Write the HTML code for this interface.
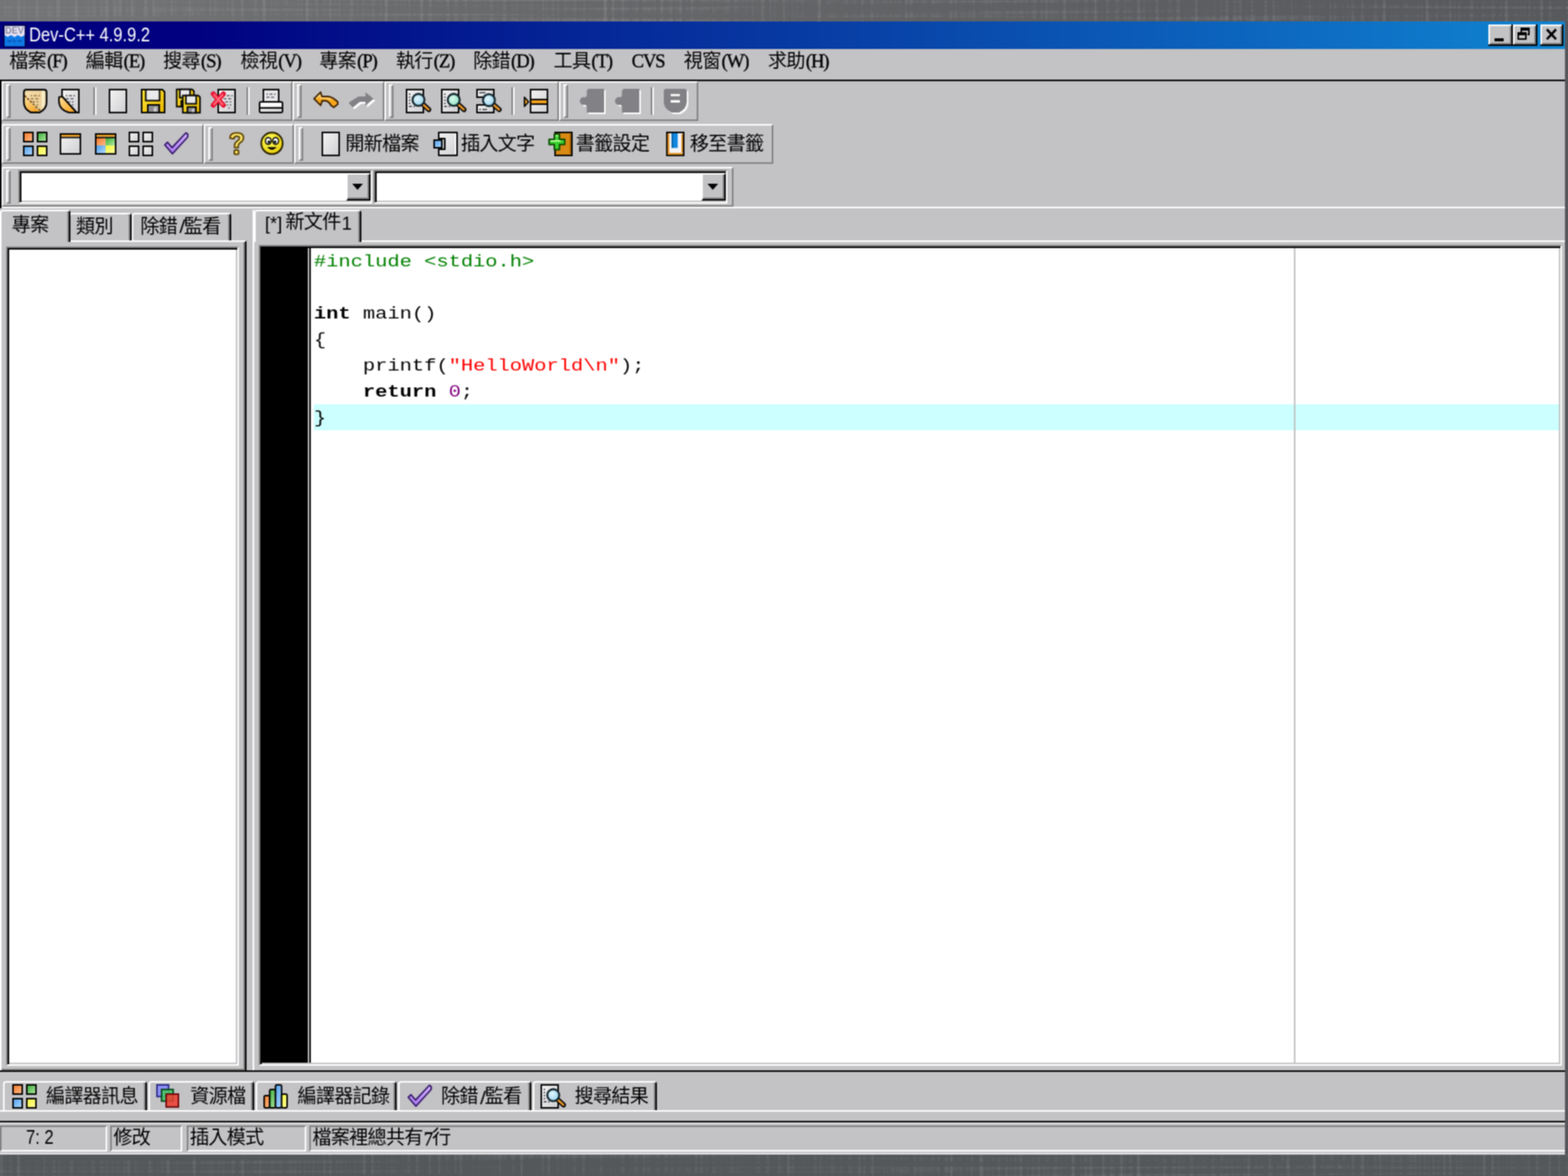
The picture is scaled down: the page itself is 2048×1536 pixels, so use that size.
<!DOCTYPE html>
<html lang="zh-Hant"><head><meta charset="utf-8"><title>Dev-C++ 4.9.9.2</title>
<style>
html,body{margin:0;padding:0;background:#595b5d;overflow:hidden}
body{width:2048px;height:1536px;position:relative}
#w{position:absolute;left:0;top:0;width:2048px;height:1536px;overflow:hidden;filter:url(#soft)}
#s{position:absolute;left:0;top:0;width:1024px;height:768px;transform:scale(2);transform-origin:0 0;font-family:"Liberation Sans",sans-serif;font-size:12px;line-height:12px;color:#000;overflow:hidden;background:#595b5d}
#s div,#s .t,#s .ic{position:absolute;box-sizing:border-box}
.t{white-space:nowrap;line-height:13px;height:13px}
.l{position:relative;top:.4px}
.ic{overflow:visible}
.cj{display:inline-block;vertical-align:top;font-family:"Liberation Sans","Noto Sans CJK TC",sans-serif;font-size:12.5px;letter-spacing:-.5px;line-height:13px;height:13px;white-space:nowrap;overflow:visible}
.ser{font-family:"Liberation Serif",serif;font-size:12.2px;letter-spacing:-.75px}
.san{font-family:"Liberation Sans",sans-serif}
.mono{font-family:"Liberation Mono",monospace}
.face{background:#c3c2c5}
.raised{background:#c3c2c5;border:1px solid;border-color:#fff #808080 #808080 #fff}
.sunk1{border:1px solid;border-color:#808080 #fff #fff #808080}
.sunk2{border:1px solid;border-color:#808080 #fff #fff #808080;box-shadow:inset 1px 1px 0 #000, inset -1px -1px 0 #c3c2c5}
.grip{width:3px;border:1px solid;border-color:#fff #808080 #808080 #fff;background:#c3c2c5}
.sep{width:2px;border-left:1px solid #808080;border-right:1px solid #fff}
.sp{display:inline-block;width:1px}
.cj+.l{margin-left:.8px}
.ser .l{-webkit-text-stroke:.22px currentColor}

</style></head>
<body>
<svg width="0" height="0" style="position:absolute"><defs><filter id="soft" x="0" y="0" width="100%" height="100%" color-interpolation-filters="sRGB"><feConvolveMatrix order="3" kernelMatrix="1 2 1 2 4 2 1 2 1" divisor="16" edgeMode="duplicate" preserveAlpha="true"/></filter>
<linearGradient id="gPg" x1="0" y1="0" x2="1" y2="1"><stop offset="0" stop-color="#f4f4f4"/><stop offset="1" stop-color="#cfcfd2"/></linearGradient>
<linearGradient id="gYl" x1="0" y1="0" x2="1" y2="1"><stop offset="0" stop-color="#ffe83a"/><stop offset="1" stop-color="#e8b400"/></linearGradient>
<linearGradient id="gOr" x1="0" y1="0" x2="1" y2="1"><stop offset="0" stop-color="#fde2a0"/><stop offset="1" stop-color="#f79a10"/></linearGradient>
<linearGradient id="gTan" x1="0" y1="0" x2="1" y2="0"><stop offset="0" stop-color="#f6dfae"/><stop offset="0.75" stop-color="#ecd09a"/><stop offset="1" stop-color="#f7ecc4"/></linearGradient>
<linearGradient id="gSo" x1="0" y1="0" x2="1" y2="1"><stop offset="0" stop-color="#f87a28"/><stop offset="1" stop-color="#fbb98a"/></linearGradient>
<linearGradient id="gSg" x1="0" y1="0" x2="1" y2="1"><stop offset="0" stop-color="#38a838"/><stop offset="1" stop-color="#b0eca0"/></linearGradient>
<linearGradient id="gSb" x1="0" y1="0" x2="1" y2="1"><stop offset="0" stop-color="#4ea0f0"/><stop offset="1" stop-color="#b0d8fa"/></linearGradient>
<linearGradient id="gSy" x1="0" y1="0" x2="1" y2="1"><stop offset="0" stop-color="#f8f838"/><stop offset="1" stop-color="#fafaa0"/></linearGradient>
<radialGradient id="gLb" cx="0.4" cy="0.4" r="0.7"><stop offset="0" stop-color="#e4f6fc"/><stop offset="1" stop-color="#8cd0ec"/></radialGradient>
<radialGradient id="gLg" cx="0.4" cy="0.4" r="0.7"><stop offset="0" stop-color="#dcfaee"/><stop offset="1" stop-color="#84e0bc"/></radialGradient>
<radialGradient id="gSm" cx="0.4" cy="0.35" r="0.75"><stop offset="0" stop-color="#ffff60"/><stop offset="1" stop-color="#e6c800"/></radialGradient>
<linearGradient id="gPu" x1="0" y1="0" x2="0" y2="1"><stop offset="0" stop-color="#d8b8ff"/><stop offset="1" stop-color="#a878f0"/></linearGradient>
</defs></svg>
<div id="w"><div id="s">
<svg class="ic" style="left:0;top:0" width="1024" height="768" viewBox="0 0 1024 768"><defs><filter id="lin" x="0" y="0" width="100%" height="100%" color-interpolation-filters="sRGB"><feTurbulence type="fractalNoise" baseFrequency="0.35 0.004" numOctaves="2" seed="3" result="v"/><feTurbulence type="fractalNoise" baseFrequency="0.004 0.45" numOctaves="2" seed="8" result="h"/><feBlend in="v" in2="h" mode="screen" result="b"/><feColorMatrix in="b" type="matrix" values="0 0 0 0 1  0 0 0 0 1  0 0 0 0 1  1.2 1.2 1.2 0 -2.1"/></filter><linearGradient id="dtop" x1="0" y1="0" x2="1" y2="0"><stop offset="0" stop-color="#747577"/><stop offset=".3" stop-color="#696a6c"/><stop offset=".7" stop-color="#5e5f62"/><stop offset="1" stop-color="#58595c"/></linearGradient></defs><rect x="0" y="0" width="1024" height="14" fill="url(#dtop)"/><rect x="0" y="754" width="1024" height="14" fill="#54585a"/><rect x="1022" y="14" width="2" height="740" fill="#56575b"/><rect x="0" y="0" width="1024" height="14" filter="url(#lin)" opacity=".27"/><rect x="0" y="754" width="1024" height="14" filter="url(#lin)" opacity=".26"/></svg>
<div class="face" style="left:0px;top:14px;width:1022px;height:740px;"></div>
<div class="" style="left:0px;top:14px;width:1022px;height:18px;background:linear-gradient(90deg,#00007f 0%,#000080 12%,#1084d0 100%)"></div>
<svg class="ic" style="left:2.2px;top:15.7px" width="15.1" height="15" viewBox="0 0 16 16"><rect x="0" y="0" width="16" height="16" fill="#00004c"/><rect x="1" y="1" width="14" height="6.5" fill="#e6e3f6"/><rect x="1" y="7.5" width="14" height="7.7" fill="#0f7ae6"/><path d="M1 7.5l2.2 1.2 2.3-1.4 2.4 1.5 2.3-1.5 2.3 1.4L15 7.5z" fill="#e6e3f6"/><text x="1.4" y="6.6" font-family="Liberation Sans,sans-serif" font-weight="bold" font-size="6.4" fill="#8a8aa0" textLength="13" lengthAdjust="spacingAndGlyphs">DEV</text><path d="M3 11.5h3M7 10.5l1.5 2M10 11.5h3" stroke="#0a58b8" stroke-width="1.2" fill="none"/></svg>
<span class="t san" style="left:19px;top:15.7px;color:#fff;font-size:12.9px;transform:scaleX(.835);transform-origin:0 0"><span class="l">Dev-C++ 4.9.9.2</span></span>
<svg class="ic" style="left:972px;top:16px" width="16" height="14" viewBox="0 0 16 14"><rect width="16" height="14" fill="#c3c2c5"/><path d="M0 13.5h15.5 V0" stroke="#000" fill="none"/><path d="M0.5 13V0.5H15" stroke="#fff" fill="none"/><path d="M1 12.5h13.5V1" stroke="#808080" fill="none"/><rect x="4" y="9" width="6" height="2" fill="#000"/></svg>
<svg class="ic" style="left:988px;top:16px" width="16" height="14" viewBox="0 0 16 14"><rect width="16" height="14" fill="#c3c2c5"/><path d="M0 13.5h15.5 V0" stroke="#000" fill="none"/><path d="M0.5 13V0.5H15" stroke="#fff" fill="none"/><path d="M1 12.5h13.5V1" stroke="#808080" fill="none"/><path d="M5.5 5V2.5h5v4H9.5" stroke="#000" fill="none"/><rect x="5" y="2" width="6" height="2" fill="#000"/><rect x="3.5" y="5.5" width="5" height="4" stroke="#000" fill="none"/><rect x="3" y="5" width="6" height="2" fill="#000"/></svg>
<svg class="ic" style="left:1006px;top:16px" width="15" height="14" viewBox="0 0 15 14"><rect width="15" height="14" fill="#c3c2c5"/><path d="M0 13.5h14.5 V0" stroke="#000" fill="none"/><path d="M0.5 13V0.5H14" stroke="#fff" fill="none"/><path d="M1 12.5h12.5V1" stroke="#808080" fill="none"/><path d="M4.2 3.2l6 6.4M10.2 3.2l-6 6.4" stroke="#000" stroke-width="1.5" fill="none"/></svg>
<span class="t ser" style="left:6px;top:34px;"><span class="cj" style="width:24px">檔案</span><span class="l">(F)</span></span>
<span class="t ser" style="left:56px;top:34px;"><span class="cj" style="width:24px">編輯</span><span class="l">(E)</span></span>
<span class="t ser" style="left:106.5px;top:34px;"><span class="cj" style="width:24px">搜尋</span><span class="l">(S)</span></span>
<span class="t ser" style="left:157px;top:34px;"><span class="cj" style="width:24px">檢視</span><span class="l">(V)</span></span>
<span class="t ser" style="left:208.5px;top:34px;"><span class="cj" style="width:24px">專案</span><span class="l">(P)</span></span>
<span class="t ser" style="left:258.5px;top:34px;"><span class="cj" style="width:24px">執行</span><span class="l">(Z)</span></span>
<span class="t ser" style="left:309px;top:34px;"><span class="cj" style="width:24px">除錯</span><span class="l">(D)</span></span>
<span class="t ser" style="left:361.5px;top:34px;"><span class="cj" style="width:24px">工具</span><span class="l">(T)</span></span>
<span class="t ser" style="left:412.5px;top:34px;"><span class="l">CVS</span></span>
<span class="t ser" style="left:446.5px;top:34px;"><span class="cj" style="width:24px">視窗</span><span class="l">(W)</span></span>
<span class="t ser" style="left:501.5px;top:34px;"><span class="cj" style="width:24px">求助</span><span class="l">(H)</span></span>
<div class="" style="left:0px;top:52px;width:1022px;height:1px;background:#000"></div>
<div class="" style="left:0px;top:52px;width:1px;height:84px;background:#000"></div>
<div class="" style="left:1px;top:135px;width:1021px;height:1px;background:#fff"></div>
<div class="raised" style="left:1px;top:53px;width:190px;height:26px;"></div>
<div class="grip" style="left:4px;top:55px;width:3px;height:22px;"></div>
<div class="raised" style="left:191px;top:53px;width:60px;height:26px;"></div>
<div class="grip" style="left:194px;top:55px;width:3px;height:22px;"></div>
<div class="raised" style="left:251px;top:53px;width:114px;height:26px;"></div>
<div class="grip" style="left:254px;top:55px;width:3px;height:22px;"></div>
<div class="raised" style="left:365px;top:53px;width:91px;height:26px;"></div>
<div class="grip" style="left:368px;top:55px;width:3px;height:22px;"></div>
<svg class="ic" style="left:15px;top:58px" width="16" height="16" viewBox="0 0 16 16"><path d="M.6 2.2Q.6 .6 2.2 .6H13.8Q15.4 .6 15.4 2.2V9Q15.4 13 11 15.4H5Q.6 13 .6 9Z" fill="url(#gTan)"/><path d="M13 1v11" stroke="#f9f0cf" stroke-width="1.4"/><path d="M.6 5L11 15.4H5Q.6 13 .6 9Z" fill="url(#gOr)"/><path d="M1 4.4L11.8 14.8" stroke="#7a4a08" stroke-width="1" stroke-dasharray="1.6 .9" fill="none"/><rect x="5" y="4" width="1" height="1" fill="#a88a50"/><rect x="7" y="4" width="2" height="1" fill="#a88a50"/><rect x="10" y="4" width="1" height="1" fill="#a88a50"/><rect x="5" y="6" width="2" height="1" fill="#a88a50"/><rect x="8" y="6" width="2" height="1" fill="#a88a50"/><rect x="6" y="8" width="2" height="1" fill="#a88a50"/><rect x="9" y="8" width="1" height="1" fill="#a88a50"/><rect x="7" y="10" width="1" height="1" fill="#a88a50"/><rect x="9" y="10" width="1" height="1" fill="#a88a50"/><rect x="8" y="12" width="1" height="1" fill="#a88a50"/><path d="M.6 2.2Q.6 .6 2.2 .6H13.8Q15.4 .6 15.4 2.2V9Q15.4 13 11 15.4H5Q.6 13 .6 9Z" fill="none" stroke="#000" stroke-width="1.1"/></svg>
<svg class="ic" style="left:38px;top:58px" width="16" height="16" viewBox="0 0 16 16"><path d="M2.5 .5H13.5V15.5H12L2.5 5Z" fill="url(#gPg)" stroke="#000"/><rect x="5" y="4" width="1" height="1" fill="#787880"/><rect x="7" y="4" width="2" height="1" fill="#787880"/><rect x="10" y="4" width="1" height="1" fill="#787880"/><rect x="5" y="6" width="2" height="1" fill="#787880"/><rect x="8" y="6" width="2" height="1" fill="#787880"/><rect x="6" y="8" width="2" height="1" fill="#787880"/><rect x="9" y="8" width="1" height="1" fill="#787880"/><rect x="7" y="10" width="1" height="1" fill="#787880"/><rect x="9" y="10" width="1" height="1" fill="#787880"/><rect x="8" y="12" width="1" height="1" fill="#787880"/><path d="M.5 5.5L2.6 5 12 15.5H7Q.5 13.5 .5 8Z" fill="url(#gOr)" stroke="#000" stroke-linejoin="round"/></svg>
<svg class="ic" style="left:69px;top:58px" width="16" height="16" viewBox="0 0 16 16"><rect x="2.5" y="0.5" width="11" height="15" fill="url(#gPg)" stroke="#000"/></svg>
<svg class="ic" style="left:92px;top:58px" width="16" height="16" viewBox="0 0 16 16"><g transform="translate(0 0) scale(1)"><path d="M.5 .5H14L15.5 2V15.5H.5Z" fill="url(#gYl)" stroke="#000" stroke-width="1"/><rect x="3.2" y=".5" width="9" height="7.2" fill="#e9e9ec" stroke="#000" stroke-width="1"/><rect x="4.5" y="10.5" width="7.5" height="5" fill="#8a8a8e" stroke="#000" stroke-width="1"/><rect x="8.4" y="12" width="2" height="3" fill="#c8c8cc"/></g></svg>
<svg class="ic" style="left:115px;top:58px" width="16" height="16" viewBox="0 0 16 16"><g transform="translate(0 0) scale(0.75)"><path d="M.5 .5H14L15.5 2V15.5H.5Z" fill="url(#gYl)" stroke="#000" stroke-width="1.33333"/><rect x="3.2" y=".5" width="9" height="7.2" fill="#e9e9ec" stroke="#000" stroke-width="1.33333"/><rect x="4.5" y="10.5" width="7.5" height="5" fill="#8a8a8e" stroke="#000" stroke-width="1.33333"/><rect x="8.4" y="12" width="2" height="3" fill="#c8c8cc"/></g><g transform="translate(4 4) scale(0.75)"><path d="M.5 .5H14L15.5 2V15.5H.5Z" fill="url(#gYl)" stroke="#000" stroke-width="1.33333"/><rect x="3.2" y=".5" width="9" height="7.2" fill="#e9e9ec" stroke="#000" stroke-width="1.33333"/><rect x="4.5" y="10.5" width="7.5" height="5" fill="#8a8a8e" stroke="#000" stroke-width="1.33333"/><rect x="8.4" y="12" width="2" height="3" fill="#c8c8cc"/></g></svg>
<svg class="ic" style="left:138px;top:58px" width="16" height="16" viewBox="0 0 16 16"><rect x="4.5" y="0.5" width="11" height="15" fill="url(#gPg)" stroke="#000"/><rect x="8" y="4" width="1" height="1" fill="#787880"/><rect x="10" y="4" width="2" height="1" fill="#787880"/><rect x="13" y="4" width="1" height="1" fill="#787880"/><rect x="8" y="6" width="2" height="1" fill="#787880"/><rect x="11" y="6" width="2" height="1" fill="#787880"/><rect x="9" y="8" width="2" height="1" fill="#787880"/><rect x="12" y="8" width="1" height="1" fill="#787880"/><rect x="10" y="10" width="1" height="1" fill="#787880"/><rect x="12" y="10" width="1" height="1" fill="#787880"/><rect x="11" y="12" width="1" height="1" fill="#787880"/><path d="M1.3 3.3l6.6 7.4M7.9 3.3l-6.6 7.4" stroke="#e81030" stroke-width="3.2" stroke-linecap="round"/><path d="M1.8 3.8l5.6 6.4M7.4 3.8l-5.6 6.4" stroke="#ff6a78" stroke-width="1.2" stroke-linecap="round"/></svg>
<svg class="ic" style="left:169px;top:58px" width="16" height="16" viewBox="0 0 16 16"><rect x="3" y="0.5" width="10" height="8" fill="#e6e6e9" stroke="#000"/><rect x="5" y="3" width="1" height="1" fill="#808088"/><rect x="7" y="3" width="2" height="1" fill="#808088"/><rect x="10" y="3" width="1" height="1" fill="#808088"/><rect x="5" y="5" width="2" height="1" fill="#808088"/><rect x="8" y="5" width="2" height="1" fill="#808088"/><rect x=".5" y="8.5" width="15" height="7" rx="1" fill="url(#gPg)" stroke="#000"/><rect x="1.5" y="9.5" width="13" height="1.6" fill="#fff"/><path d="M1 12.5h14" stroke="#000"/></svg>
<svg class="ic" style="left:205px;top:58px" width="16" height="16" viewBox="0 0 16 16"><path d="M.1 6.5L4.4 2.2L5.2 5H9.5Q12.6 5.6 15.6 8.6V10L13 12.1L11.2 10.8Q9.6 8.3 8 7.9L5.4 7.8L4.4 10.8Z" fill="#f8a61c" stroke="#3a2000" stroke-width="1" stroke-linejoin="round"/><path d="M1.6 6.4L3.9 4.1L4.5 6.1Q9 5.9 11.5 7" stroke="#fdd27a" stroke-width=".9" fill="none"/></svg>
<svg class="ic" style="left:228px;top:58px" width="16" height="16" viewBox="0 0 16 16"><path d="M16 6.5L10.7 2.2V5H6.2L0 8.7V9.6L2.4 12.2L7 8.5H10.7V11Z" fill="#fff" transform="translate(1 1.2)"/><path d="M16 6.5L10.7 2.2V5H6.2L0 8.7V9.6L2.4 12.2L7 8.5H10.7V11Z" fill="#828286"/></svg>
<svg class="ic" style="left:265px;top:58px" width="16" height="16" viewBox="0 0 16 16"><rect x="0.5" y="0.5" width="11" height="15" fill="url(#gPg)" stroke="#000"/><rect x="2" y="3" width="1" height="1" fill="#606068"/><rect x="2" y="5" width="1" height="1" fill="#606068"/><rect x="2" y="7" width="1" height="1" fill="#606068"/><rect x="2" y="9" width="1" height="1" fill="#606068"/><rect x="2" y="11" width="2" height="1" fill="#606068"/><rect x="5" y="11" width="1" height="1" fill="#606068"/><path d="M10.9 9.8L15 13.6" stroke="#000" stroke-width="3.2" stroke-linecap="round"/><path d="M11.5 10.4L14.9 13.5" stroke="#e8962a" stroke-width="1.5" stroke-linecap="round"/><circle cx="8.3" cy="7.2" r="3.9" fill="url(#gLb)" stroke="#14262e" stroke-width="1.3"/></svg>
<svg class="ic" style="left:288px;top:58px" width="16" height="16" viewBox="0 0 16 16"><rect x="0.5" y="0.5" width="11" height="15" fill="url(#gPg)" stroke="#000"/><rect x="2" y="3" width="1" height="1" fill="#606068"/><rect x="2" y="5" width="1" height="1" fill="#606068"/><rect x="2" y="7" width="1" height="1" fill="#606068"/><rect x="2" y="9" width="1" height="1" fill="#606068"/><rect x="2" y="11" width="2" height="1" fill="#606068"/><rect x="5" y="11" width="1" height="1" fill="#606068"/><path d="M10.9 9.8L15 13.6" stroke="#000" stroke-width="3.2" stroke-linecap="round"/><path d="M11.5 10.4L14.9 13.5" stroke="#e8962a" stroke-width="1.5" stroke-linecap="round"/><circle cx="8.3" cy="7.2" r="3.9" fill="url(#gLg)" stroke="#14262e" stroke-width="1.3"/></svg>
<svg class="ic" style="left:311px;top:58px" width="16" height="16" viewBox="0 0 16 16"><rect x="0.5" y="0.5" width="11" height="5" fill="url(#gPg)" stroke="#000"/><rect x="0.5" y="10.5" width="11" height="5" fill="url(#gPg)" stroke="#000"/><rect x="2" y="2" width="4" height="1" fill="#606068"/><rect x="2" y="13" width="1" height="1" fill="#606068"/><rect x="4" y="13" width="3" height="1" fill="#606068"/><path d="M10.9 10L15 13.6" stroke="#000" stroke-width="3.2" stroke-linecap="round"/><path d="M11.5 10.6L14.9 13.5" stroke="#e8962a" stroke-width="1.5" stroke-linecap="round"/><circle cx="8.3" cy="7.4" r="3.9" fill="url(#gLb)" stroke="#14262e" stroke-width="1.3"/></svg>
<svg class="ic" style="left:342px;top:58px" width="16" height="16" viewBox="0 0 16 16"><rect x="4.5" y="0.5" width="11" height="15" fill="url(#gPg)" stroke="#000"/><rect x="5" y="7" width="10" height="3" fill="#f0a020"/><path d="M5 7h10M5 10h10" stroke="#000" stroke-width=".9"/><path d="M.5 5.5L3.2 8.5L.5 11.5Z" fill="#f0a020" stroke="#000" stroke-width=".9" stroke-linejoin="round"/></svg>
<svg class="ic" style="left:379px;top:58px" width="16" height="16" viewBox="0 0 16 16"><path d="M5.2 0H15.5V15.5H4.2V11.5L3.2 10.4A2.6 2.6 0 1 1 3.2 5.6L4.2 4.5V1.2Z" fill="#fff" transform="translate(1 1)"/><path d="M5.2 0H15.5V15.5H4.2V11.5L3.2 10.4A2.6 2.6 0 1 1 3.2 5.6L4.2 4.5V1.2Z" fill="#828286"/></svg>
<svg class="ic" style="left:402px;top:58px" width="16" height="16" viewBox="0 0 16 16"><path d="M5.2 0H15.5V15.5H4.2V11.5L3.2 10.4A2.6 2.6 0 1 1 3.2 5.6L4.2 4.5V1.2Z" fill="#fff" transform="translate(1 1)"/><path d="M5.2 0H15.5V15.5H4.2V11.5L3.2 10.4A2.6 2.6 0 1 1 3.2 5.6L4.2 4.5V1.2Z" fill="#828286"/></svg>
<svg class="ic" style="left:433px;top:58px" width="16" height="16" viewBox="0 0 16 16"><path d="M0.5 1.5Q0.5 0 2 0H14Q15.5 0 15.5 1.5V8.5Q15.5 13 10.5 15.5H5.5Q0.5 13 0.5 8.5Z" fill="#fff" transform="translate(1 1)"/><path d="M0.5 1.5Q0.5 0 2 0H14Q15.5 0 15.5 1.5V8.5Q15.5 13 10.5 15.5H5.5Q0.5 13 0.5 8.5Z" fill="#828286"/><rect x="5" y="3.4" width="6" height="1.4" fill="#fff"/><rect x="5" y="7.4" width="6" height="1.6" fill="#fff"/></svg>
<div class="sep" style="left:61px;top:57px;width:2px;height:18px;"></div>
<div class="sep" style="left:161px;top:57px;width:2px;height:18px;"></div>
<div class="sep" style="left:334px;top:57px;width:2px;height:18px;"></div>
<div class="sep" style="left:425px;top:57px;width:2px;height:18px;"></div>
<div class="raised" style="left:1px;top:81px;width:132px;height:26px;"></div>
<div class="grip" style="left:4px;top:83px;width:3px;height:22px;"></div>
<div class="raised" style="left:133px;top:81px;width:59px;height:26px;"></div>
<div class="grip" style="left:136px;top:83px;width:3px;height:22px;"></div>
<div class="raised" style="left:192px;top:81px;width:313px;height:26px;"></div>
<div class="grip" style="left:195px;top:83px;width:3px;height:22px;"></div>
<svg class="ic" style="left:15px;top:86px" width="16" height="16" viewBox="0 0 16 16"><rect x="0.5" y="0.5" width="6" height="6" fill="url(#gSo)" stroke="#000"/><rect x="9.5" y="0.5" width="6" height="6" fill="url(#gSg)" stroke="#000"/><rect x="0.5" y="9.5" width="6" height="6" fill="url(#gSb)" stroke="#000"/><rect x="9.5" y="9.5" width="6" height="6" fill="url(#gSy)" stroke="#000"/></svg>
<svg class="ic" style="left:38px;top:86px" width="16" height="16" viewBox="0 0 16 16"><rect x="1.5" y="1.5" width="13" height="13" fill="url(#gPg)" stroke="#000"/><rect x="2" y="2" width="12" height="1.3" fill="#f0a020"/><path d="M2 3.8h12" stroke="#000" stroke-width=".9"/></svg>
<svg class="ic" style="left:61px;top:86px" width="16" height="16" viewBox="0 0 16 16"><rect x="1.5" y="1.5" width="13" height="13" fill="#fff" stroke="#000"/><rect x="2" y="4" width="6" height="5" fill="url(#gSo)"/><rect x="8" y="4" width="6" height="5" fill="url(#gSg)"/><rect x="2" y="9" width="6" height="5" fill="url(#gSb)"/><rect x="8" y="9" width="6" height="5" fill="url(#gSy)"/><rect x="2" y="2" width="12" height="1.3" fill="#f0a020"/><path d="M2 3.8h12" stroke="#000" stroke-width=".9"/></svg>
<svg class="ic" style="left:84px;top:86px" width="16" height="16" viewBox="0 0 16 16"><rect x="0.5" y="0.5" width="6" height="6" fill="url(#gPg)" stroke="#000"/><rect x="9.5" y="0.5" width="6" height="6" fill="url(#gPg)" stroke="#000"/><rect x="0.5" y="9.5" width="6" height="6" fill="url(#gPg)" stroke="#000"/><rect x="9.5" y="9.5" width="6" height="6" fill="url(#gPg)" stroke="#000"/></svg>
<svg class="ic" style="left:107px;top:86px" width="16" height="16" viewBox="0 0 16 16"><path d="M.6 8.6L2.4 6.9L5.4 10.4L14.4 .8L15.6 1.6V3.4L5.6 14.4Z" fill="url(#gPu)" stroke="#35186a" stroke-width="1" stroke-linejoin="round"/></svg>
<svg class="ic" style="left:147px;top:86px" width="16" height="16" viewBox="0 0 16 16"><path d="M3.2 4.2Q3.2 .8 7.6 .8Q12 .8 12 4Q12 6 9.6 7.4Q8.6 8 8.6 9.4V10.4H6.2V9Q6.2 7.2 8 6Q9.4 5 9.4 4.1Q9.4 3 7.6 3Q5.8 3 5.8 4.6Z" fill="#fbe36a" stroke="#5a4200" stroke-width="1" stroke-linejoin="round"/><rect x="6" y="12" width="2.8" height="2.8" rx=".8" fill="#fbe36a" stroke="#5a4200"/></svg>
<svg class="ic" style="left:170px;top:86px" width="16" height="16" viewBox="0 0 16 16"><circle cx="7.6" cy="7.6" r="7" fill="url(#gSm)" stroke="#2a2200" stroke-width="1.1"/><ellipse cx="5.2" cy="6" rx="1.9" ry="2.2" fill="#fff" stroke="#000" stroke-width=".8"/><ellipse cx="10" cy="6" rx="1.9" ry="2.2" fill="#fff" stroke="#000" stroke-width=".8"/><circle cx="5.6" cy="6.6" r=".9"/><circle cx="9.6" cy="6.6" r=".9"/><path d="M5.2 10.4Q7.6 12.6 10 10.4Z" fill="#3a1800" stroke="#000" stroke-width=".6"/></svg>
<svg class="ic" style="left:208px;top:86px" width="16" height="16" viewBox="0 0 16 16"><rect x="2.5" y="0.5" width="11" height="15" fill="url(#gPg)" stroke="#000"/></svg>
<svg class="ic" style="left:283px;top:86px" width="16" height="16" viewBox="0 0 16 16"><path d="M3.5 .5H15.5V15.5H3.5V11.5H7.5V4.5H3.5Z" fill="url(#gPg)" stroke="#000" stroke-linejoin="round"/><path d="M14.5 1.5V14.5" stroke="#fff"/><rect x=".5" y="5.5" width="5" height="5" fill="url(#gSb)" stroke="#000"/></svg>
<svg class="ic" style="left:358px;top:86px" width="16" height="16" viewBox="0 0 16 16"><path d="M4.5 .5H15.5V15.5H4.5Z" fill="#d98a14" stroke="#000"/><path d="M14.5 1.5V14.5" stroke="#a86400"/><path d="M4 1.6H7.4V5H10.8V8.4H7.4V11.8H4V8.4H.6V5H4Z" fill="#3ad030" stroke="#0a4a00" stroke-width="1" stroke-linejoin="round"/><path d="M4.9 2.6h1.6M1.6 6h6.6" stroke="#b8ffa0" stroke-width="1"/></svg>
<svg class="ic" style="left:433px;top:86px" width="16" height="16" viewBox="0 0 16 16"><path d="M2.5 .5H13.5V15.5H2.5Z" fill="#f4f4f6" stroke="#000"/><path d="M3.5 1V14.5H13" stroke="#e09020" stroke-width="1.2" fill="none"/><path d="M12.5 1.5V13.5" stroke="#e09020" stroke-width="1"/><rect x="5.6" y="1" width="4" height="9.6" fill="#1088e0"/><path d="M6.1 1v9.6" stroke="#0860a8" stroke-width="1"/></svg>
<span class="t ser" style="left:225.5px;top:88px;"><span class="cj" style="width:48px">開新檔案</span></span>
<span class="t ser" style="left:301px;top:88px;"><span class="cj" style="width:48px">插入文字</span></span>
<span class="t ser" style="left:376px;top:88px;"><span class="cj" style="width:48px">書籤設定</span></span>
<span class="t ser" style="left:450.5px;top:88px;"><span class="cj" style="width:48px">移至書籤</span></span>
<div class="raised" style="left:1px;top:109px;width:478px;height:26px;"></div>
<div class="grip" style="left:4px;top:111px;width:3px;height:22px;"></div>
<div class="sunk2" style="left:12px;top:111px;width:231px;height:22px;background:#fff"></div>
<div class="" style="left:226px;top:113px;width:16px;height:18px;background:#c3c2c5;border:1px solid;border-color:#fff #000 #000 #fff;box-shadow:inset -1px -1px 0 #808080"><svg style="position:absolute;left:2.6px;top:6px" width="7" height="4" viewBox="0 0 7 4"><path d="M0 0h7L3.5 4z" fill="#000"/></svg></div>
<div class="sunk2" style="left:244px;top:111px;width:231px;height:22px;background:#fff"></div>
<div class="" style="left:458px;top:113px;width:16px;height:18px;background:#c3c2c5;border:1px solid;border-color:#fff #000 #000 #fff;box-shadow:inset -1px -1px 0 #808080"><svg style="position:absolute;left:2.6px;top:6px" width="7" height="4" viewBox="0 0 7 4"><path d="M0 0h7L3.5 4z" fill="#000"/></svg></div>
<div class="" style="left:0px;top:157px;width:161px;height:542.75px;background:#c3c2c5;border:1px solid;border-color:#fff #000 #000 #fff;box-shadow:inset -1px -1px 0 #808080"></div>
<div class="" style="left:45px;top:139px;width:41px;height:18px;background:#c3c2c5;border-top:1px solid #fff;border-left:1px solid #fff;border-right:1px solid #000;box-shadow:inset -1px 0 0 #808080;border-radius:2px 2px 0 0"></div>
<div class="" style="left:86px;top:139px;width:65px;height:18px;background:#c3c2c5;border-top:1px solid #fff;border-left:1px solid #fff;border-right:1px solid #000;box-shadow:inset -1px 0 0 #808080;border-radius:2px 2px 0 0"></div>
<div class="" style="left:0px;top:137px;width:46px;height:21px;background:#c3c2c5;border-top:1px solid #fff;border-left:1px solid #fff;border-right:1px solid #000;box-shadow:inset -1px 0 0 #808080;border-radius:2px 2px 0 0"></div>
<div class="face" style="left:1px;top:157px;width:43px;height:2px;"></div>
<span class="t ser" style="left:7.6px;top:140.6px;"><span class="cj" style="width:24px">專案</span></span>
<span class="t ser" style="left:49.6px;top:142px;"><span class="cj" style="width:24px">類別</span></span>
<span class="t ser" style="left:91.6px;top:142px;"><span class="cj" style="width:24px">除錯</span><span class="l"><i class="sp"></i><b>/</b></span><span class="cj" style="width:24px">監看</span></span>
<div class="sunk2" style="left:4px;top:161px;width:152px;height:535px;background:#fff"></div>
<div class="" style="left:165px;top:136.5px;width:1px;height:562px;background:#fff"></div>
<div class="" style="left:165px;top:156.5px;width:857px;height:1px;background:#fff"></div>
<div class="" style="left:166px;top:136.5px;width:70px;height:21px;background:#c3c2c5;border-top:1px solid #fff;border-left:1px solid #fff;border-right:1px solid #000;box-shadow:inset -1px 0 0 #808080;border-radius:2px 2px 0 0"></div>
<div class="face" style="left:167px;top:156.5px;width:67px;height:2px;"></div>
<span class="t san" style="left:173px;top:139.4px;font-size:12px"><span class="l">[*]<i class="sp"></i><i class="sp"></i></span><span class="cj" style="width:36px">新文件</span><span class="l">1</span></span>
<div class="sunk2" style="left:169px;top:160px;width:851px;height:536px;background:#fff"></div>
<div class="" style="left:171px;top:162px;width:30px;height:532px;background:#000"></div>
<div class="" style="left:201px;top:162px;width:1px;height:532px;background:#c3c2c5"></div>
<div class="" style="left:202px;top:162px;width:1px;height:532px;background:#000"></div>
<div class="" style="left:205px;top:264px;width:813px;height:17px;background:#ccffff"></div>
<div class="" style="left:845px;top:162px;width:1px;height:532px;background:#c0c0c0"></div>
<span class="t mono" style="left:205.2px;top:162.9px;font-size:11.4px;line-height:17px;height:17px;white-space:pre;transform:scaleX(1.1696);transform-origin:0 0"><span style="color:#008000">#include &lt;stdio.h&gt;</span></span>
<span class="t mono" style="left:205.2px;top:196.9px;font-size:11.4px;line-height:17px;height:17px;white-space:pre;transform:scaleX(1.1696);transform-origin:0 0"><b>int</b> main()</span>
<span class="t mono" style="left:205.2px;top:213.9px;font-size:11.4px;line-height:17px;height:17px;white-space:pre;transform:scaleX(1.1696);transform-origin:0 0">{</span>
<span class="t mono" style="left:205.2px;top:230.9px;font-size:11.4px;line-height:17px;height:17px;white-space:pre;transform:scaleX(1.1696);transform-origin:0 0">    printf(<span style="color:#f00">"HelloWorld\n"</span>);</span>
<span class="t mono" style="left:205.2px;top:247.9px;font-size:11.4px;line-height:17px;height:17px;white-space:pre;transform:scaleX(1.1696);transform-origin:0 0">    <b>return</b> <span style="color:#800080">0</span>;</span>
<span class="t mono" style="left:205.2px;top:264.9px;font-size:11.4px;line-height:17px;height:17px;white-space:pre;transform:scaleX(1.1696);transform-origin:0 0">}</span>
<div class="" style="left:0px;top:698.75px;width:1022px;height:1px;background:#000"></div>
<div class="" style="left:2px;top:706px;width:94px;height:19.5px;border-left:1px solid #fff;border-top:1px solid #fff;border-right:1px solid #000;box-shadow:inset -1px 0 0 #808080;border-radius:2px 2px 0 0"></div>
<svg class="ic" style="left:8px;top:708.3px" width="16" height="16" viewBox="0 0 16 16"><rect x="0.5" y="0.5" width="6" height="6" fill="url(#gSo)" stroke="#000"/><rect x="9.5" y="0.5" width="6" height="6" fill="url(#gSg)" stroke="#000"/><rect x="0.5" y="9.5" width="6" height="6" fill="url(#gSb)" stroke="#000"/><rect x="9.5" y="9.5" width="6" height="6" fill="url(#gSy)" stroke="#000"/></svg>
<span class="t ser" style="left:30px;top:710.2px;"><span class="cj" style="width:60px">編譯器訊息</span></span>
<div class="" style="left:97px;top:706px;width:69px;height:19.5px;border-left:1px solid #fff;border-top:1px solid #fff;border-right:1px solid #000;box-shadow:inset -1px 0 0 #808080;border-radius:2px 2px 0 0"></div>
<svg class="ic" style="left:102px;top:708.3px" width="16" height="16" viewBox="0 0 16 16"><rect x=".5" y=".5" width="7.6" height="7.6" fill="#8c8ef2" stroke="#2a2a88"/><rect x="3.5" y="3.5" width="7.6" height="7.6" fill="#46c466" fill-opacity=".9" stroke="#0a4a20"/><rect x="6.5" y="6.5" width="8" height="8.4" fill="#ee3c30" fill-opacity=".86" stroke="#6a0808"/></svg>
<span class="t ser" style="left:124.2px;top:710.2px;"><span class="cj" style="width:36px">資源檔</span></span>
<div class="" style="left:167px;top:706px;width:92px;height:19.5px;border-left:1px solid #fff;border-top:1px solid #fff;border-right:1px solid #000;box-shadow:inset -1px 0 0 #808080;border-radius:2px 2px 0 0"></div>
<svg class="ic" style="left:172px;top:708.3px" width="16" height="16" viewBox="0 0 16 16"><rect x=".5" y="7.5" width="3.6" height="8" rx="1" fill="url(#gSo)" stroke="#000"/><rect x="4.1" y="3.5" width="3.8" height="12" rx="1" fill="url(#gSg)" stroke="#000"/><rect x="7.9" y=".5" width="4" height="15" rx="1" fill="url(#gSb)" stroke="#000"/><rect x="11.9" y="6.5" width="3.6" height="9" rx="1" fill="url(#gSy)" stroke="#000"/></svg>
<span class="t ser" style="left:194.2px;top:710.2px;"><span class="cj" style="width:60px">編譯器記錄</span></span>
<div class="" style="left:260px;top:706px;width:87px;height:19.5px;border-left:1px solid #fff;border-top:1px solid #fff;border-right:1px solid #000;box-shadow:inset -1px 0 0 #808080;border-radius:2px 2px 0 0"></div>
<svg class="ic" style="left:266px;top:708.3px" width="16" height="16" viewBox="0 0 16 16"><path d="M.6 8.6L2.4 6.9L5.4 10.4L14.4 .8L15.6 1.6V3.4L5.6 14.4Z" fill="url(#gPu)" stroke="#35186a" stroke-width="1" stroke-linejoin="round"/></svg>
<span class="t ser" style="left:288px;top:710.2px;"><span class="cj" style="width:24px">除錯</span><span class="l"><i class="sp"></i><b>/</b></span><span class="cj" style="width:24px">監看</span></span>
<div class="" style="left:348px;top:706px;width:81px;height:19.5px;border-left:1px solid #fff;border-top:1px solid #fff;border-right:1px solid #000;box-shadow:inset -1px 0 0 #808080;border-radius:2px 2px 0 0"></div>
<svg class="ic" style="left:353px;top:708.3px" width="16" height="16" viewBox="0 0 16 16"><rect x="0.5" y="0.5" width="11" height="15" fill="url(#gPg)" stroke="#000"/><rect x="2" y="3" width="1" height="1" fill="#606068"/><rect x="2" y="5" width="1" height="1" fill="#606068"/><rect x="2" y="7" width="1" height="1" fill="#606068"/><rect x="2" y="9" width="1" height="1" fill="#606068"/><rect x="2" y="11" width="2" height="1" fill="#606068"/><rect x="5" y="11" width="1" height="1" fill="#606068"/><path d="M10.9 9.8L15 13.6" stroke="#000" stroke-width="3.2" stroke-linecap="round"/><path d="M11.5 10.4L14.9 13.5" stroke="#e8962a" stroke-width="1.5" stroke-linecap="round"/><circle cx="8.3" cy="7.2" r="3.9" fill="url(#gLb)" stroke="#14262e" stroke-width="1.3"/></svg>
<span class="t ser" style="left:375.2px;top:710.2px;"><span class="cj" style="width:48px">搜尋結果</span></span>
<div class="" style="left:0px;top:725px;width:1022px;height:1.2px;background:#fff"></div>
<div class="" style="left:0px;top:731.6px;width:1022px;height:1.2px;background:#000"></div>
<div class="" style="left:0px;top:732.9px;width:1022px;height:1px;background:#dddde0"></div>
<div class="sunk1" style="left:0px;top:735px;width:70px;height:17px;"></div>
<div class="sunk1" style="left:72px;top:735px;width:47px;height:17px;"></div>
<div class="sunk1" style="left:122px;top:735px;width:78px;height:17px;"></div>
<div class="sunk1" style="left:202px;top:735px;width:820px;height:17px;border-right:none"></div>
<div class="" style="left:0px;top:753px;width:1022px;height:1px;background:#e4e4e6"></div>
<span class="t san" style="left:17.4px;top:736.4px;font-size:12.6px;transform:scaleX(.86);transform-origin:0 0"><span class="l">7: 2</span></span>
<span class="t ser" style="left:74px;top:737.3px;"><span class="cj" style="width:24px">修改</span></span>
<span class="t ser" style="left:124px;top:737.3px;"><span class="cj" style="width:48px">插入模式</span></span>
<span class="t ser" style="left:204px;top:737.3px;"><span class="cj" style="width:72px">檔案裡總共有</span><span class="l">7</span><span class="cj" style="width:12px">行</span></span>
</div></div>
</body></html>
